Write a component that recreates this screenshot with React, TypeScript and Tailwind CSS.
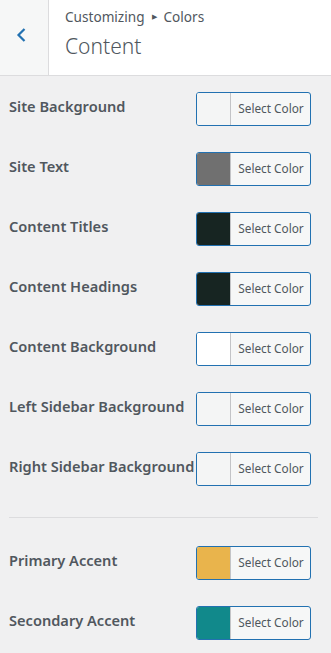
const font = { fontFamily: '"Noto Sans", "Open Sans", sans-serif' };

type Row = { label: string; color: string };

const mainRows: Row[] = [
  { label: 'Site Background', color: '#f4f5f5' },
  { label: 'Site Text', color: '#707070' },
  { label: 'Content Titles', color: '#172522' },
  { label: 'Content Headings', color: '#172522' },
  { label: 'Content Background', color: '#ffffff' },
  { label: 'Left Sidebar Background', color: '#f4f5f5' },
  { label: 'Right Sidebar Background', color: '#f4f5f5' },
];

const accentRows: Row[] = [
  { label: 'Primary Accent', color: '#e9b44c' },
  { label: 'Secondary Accent', color: '#11898b' },
];

function ColorButton({ color }: { color: string }) {
  return (
    <button className="flex h-[34px] w-[115px] shrink-0 overflow-hidden rounded-[3px] border border-[#2271b1] bg-[#f6f7f7]">
      <span className="h-full w-[34px] border-r border-[#c3c4c7]" style={{ background: color }} />
      <span className="flex h-full flex-1 items-center justify-center pl-[1px] text-[11.8px] text-[#50575e]">
        Select Color
      </span>
    </button>
  );
}

function ColorRow({ row }: { row: Row }) {
  return (
    <div className="flex h-[34px] items-center justify-between">
      <span className="-mt-[4px] whitespace-nowrap text-[14.6px] font-semibold text-[#50575e]">
        {row.label}
      </span>
      <ColorButton color={row.color} />
    </div>
  );
}

export default function App() {
  return (
    <div className="min-h-[653px] w-[331px] bg-[#f0f0f1]" style={font}>
      <header className="flex h-[76px] border-b border-[#dcdcde] bg-white">
        <button className="flex w-[49px] items-center justify-center border-r border-[#dcdcde] bg-[#f6f7f7]">
          <svg width="14" height="16" viewBox="0 0 14 16" className="-ml-[4px] -mt-[5px]">
            <polyline points="9.5,2 3.5,8 9.5,14" fill="none" stroke="#2271b1" strokeWidth="2.2" />
          </svg>
        </button>
        <div className="flex flex-col pl-[16px] pt-[7px]">
          <div className="flex items-center text-[13.6px] text-[#50575e]">
            <span>Customizing</span>
            <span className="mx-[7px] text-[7px]">▶</span>
            <span>Colors</span>
          </div>
          <div className="mt-[4px] text-[21px] font-light text-[#50575e]">Content</div>
        </div>
      </header>

      <div className="flex flex-col gap-[26px] pl-[9px] pr-[20px] pt-[16px]">
        {mainRows.map((row) => (
          <ColorRow key={row.label} row={row} />
        ))}
      </div>

      <div className="ml-[9px] mr-[13px] mb-[28px] mt-[31px] border-t border-[#dcdcde]" />

      <div className="flex flex-col gap-[26px] pl-[9px] pr-[20px] pb-[14px]">
        {accentRows.map((row) => (
          <ColorRow key={row.label} row={row} />
        ))}
      </div>
    </div>
  );
}
